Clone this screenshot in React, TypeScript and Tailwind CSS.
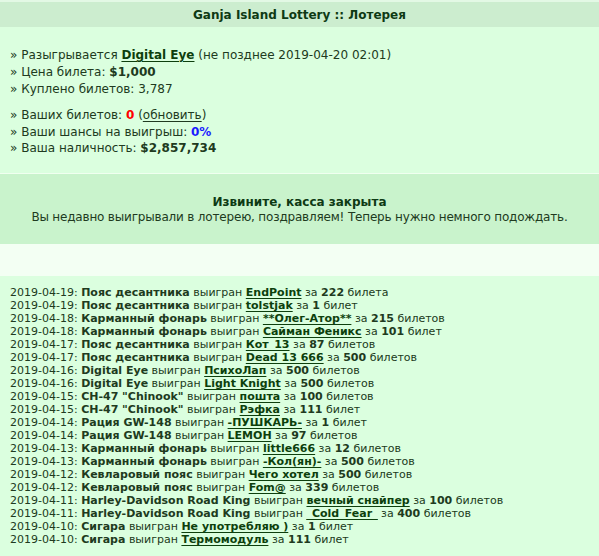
import React from "react";

type Win = {
  date: string;
  prize: string;
  user: string;
  count: string;
  word: string;
};

const wins: Win[] = [
  { date: "2019-04-19", prize: "Пояс десантника", user: "EndPoint", count: "222", word: "билета" },
  { date: "2019-04-19", prize: "Пояс десантника", user: "tolstjak", count: "1", word: "билет" },
  { date: "2019-04-18", prize: "Карманный фонарь", user: "**Олег-Атор**", count: "215", word: "билетов" },
  { date: "2019-04-18", prize: "Карманный фонарь", user: "Сайман Феникс", count: "101", word: "билет" },
  { date: "2019-04-17", prize: "Пояс десантника", user: "Кот_13", count: "87", word: "билетов" },
  { date: "2019-04-17", prize: "Пояс десантника", user: "Dead 13 666", count: "500", word: "билетов" },
  { date: "2019-04-16", prize: "Digital Eye", user: "ПсихоЛап", count: "500", word: "билетов" },
  { date: "2019-04-16", prize: "Digital Eye", user: "Light Knight", count: "500", word: "билетов" },
  { date: "2019-04-15", prize: 'CH-47 "Chinook"', user: "пошта", count: "100", word: "билетов" },
  { date: "2019-04-15", prize: 'CH-47 "Chinook"', user: "Рэфка", count: "111", word: "билет" },
  { date: "2019-04-14", prize: "Рация GW-148", user: "-ПУШКАРЬ-", count: "1", word: "билет" },
  { date: "2019-04-14", prize: "Рация GW-148", user: "LEMOH", count: "97", word: "билетов" },
  { date: "2019-04-13", prize: "Карманный фонарь", user: "little666", count: "12", word: "билетов" },
  { date: "2019-04-13", prize: "Карманный фонарь", user: "-Кол(ян)-", count: "500", word: "билетов" },
  { date: "2019-04-12", prize: "Кевларовый пояс", user: "Чего хотел", count: "500", word: "билетов" },
  { date: "2019-04-12", prize: "Кевларовый пояс", user: "Fom@", count: "339", word: "билетов" },
  { date: "2019-04-11", prize: "Harley-Davidson Road King", user: "вечный снайпер", count: "100", word: "билетов" },
  { date: "2019-04-11", prize: "Harley-Davidson Road King", user: "_Cold_Fear_", count: "400", word: "билетов" },
  { date: "2019-04-10", prize: "Сигара", user: "Не употребляю )", count: "1", word: "билет" },
  { date: "2019-04-10", prize: "Сигара", user: "Термомодуль", count: "111", word: "билет" },
];

const Link = ({ children }: { children: React.ReactNode }) => (
  <a href="#" className="font-bold text-[#0d3f0d] underline underline-offset-2">
    {children}
  </a>
);

export default function App() {
  return (
    <div className="w-[599px] h-[556px] overflow-hidden bg-[#dbffdf] font-['DejaVu_Sans',Verdana,sans-serif] text-[#203a20]">
      {/* title bar */}
      <div className="border-t-2 border-[#e3f8e5] bg-[#ccedcf] h-[27px] flex items-center justify-center text-[12px] font-bold text-[#0e3a14]">
        Ganja Island Lottery :: Лотерея
      </div>

      {/* draw info */}
      <div className="h-[146px] px-[10px] pt-[20px] text-[12px] leading-[17px]">
        <div>
          » Разыгрывается <Link>Digital Eye</Link> (не позднее 2019-04-20 02:01)
        </div>
        <div>
          » Цена билета: <b>$1,000</b>
        </div>
        <div>» Куплено билетов: 3,787</div>
        <div className="mt-[9px]">
          » Ваших билетов: <b className="text-[#ff0000]">0</b> (
          <a href="#" className="underline underline-offset-2">обновить</a>)
        </div>
        <div className="leading-[16px]">
          » Ваши шансы на выигрыш: <b className="text-[#1a1aff]">0%</b>
        </div>
        <div className="leading-[16px]">
          » Ваша наличность: <b>$2,857,734</b>
        </div>
      </div>

      {/* closed notice */}
      <div className="border-t border-[#f0fff0] bg-[#c9f3cc] h-[71px] flex flex-col items-center justify-center text-[12px] leading-[15px] pt-[2px]">
        <b className="text-[#0e3a14]">Извините, касса закрыта</b>
        <div className="tracking-[-0.18px]">
          Вы недавно выигрывали в лотерею, поздравляем! Теперь нужно немного подождать.
        </div>
      </div>

      <div className="h-[32px] bg-[#f3fff3]" />

      {/* recent winners */}
      <div className="px-[10px] pt-[10px] text-[11px] leading-[13px]">
        {wins.map((w, i) => (
          <div key={i} className="whitespace-nowrap">
            {w.date}: <b>{w.prize}</b> выигран <Link>{w.user}</Link> за <b>{w.count}</b> {w.word}
          </div>
        ))}
      </div>
    </div>
  );
}
